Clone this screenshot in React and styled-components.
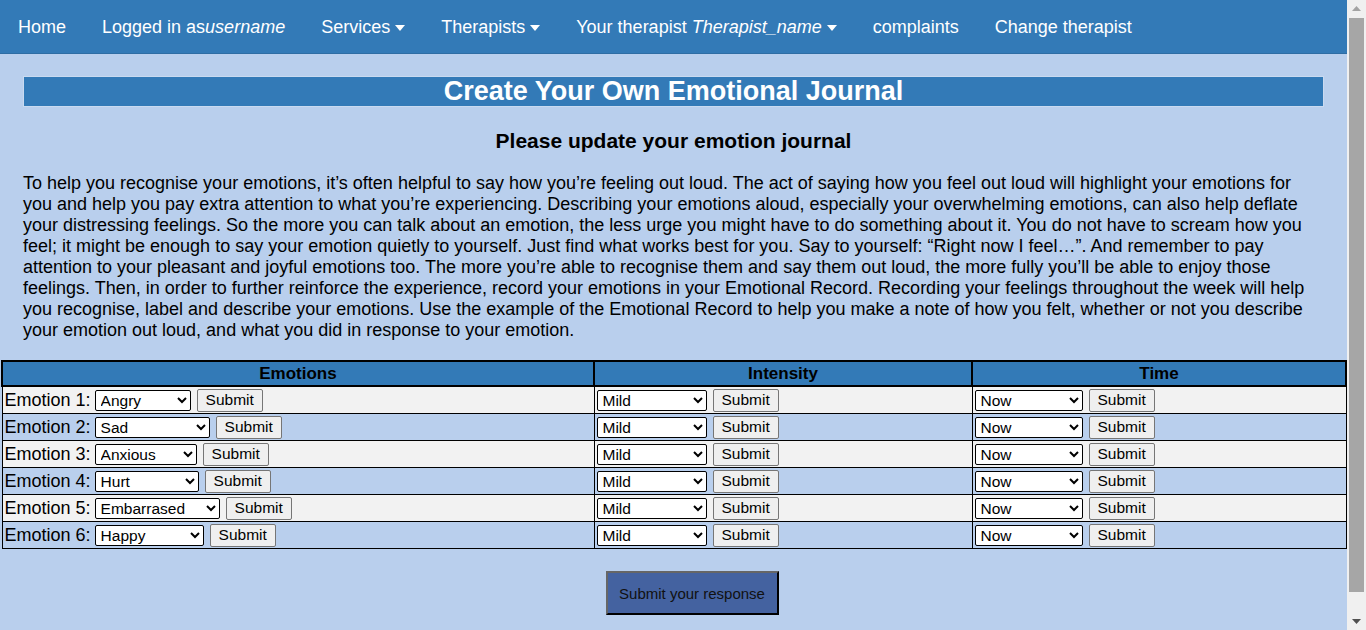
import React from "react";
import styled, { createGlobalStyle } from "styled-components";

const GlobalStyle = createGlobalStyle`
  html, body {
    margin: 0;
    padding: 0;
  }
  body {
    background: #b9cfed;
    font-family: "Liberation Sans", Arial, sans-serif;
    color: #000;
  }
`;

const Page = styled.div`
  width: calc(100% - 19px);
`;

/* window scrollbar, drawn since the capture hides the real one */
const ScrollBar = styled.div`
  position: fixed;
  top: 0;
  right: 0;
  width: 19px;
  height: 100vh;
  background: #f0f0f0;
  display: flex;
  flex-direction: column;
  align-items: center;
`;

const ScrollArrow = styled.div`
  height: 17px;
  display: flex;
  align-items: center;
  justify-content: center;
  svg {
    display: block;
  }
`;

const ScrollThumb = styled.div`
  width: 15px;
  margin-top: 1px;
  height: 574px;
  background: #a6a6a6;
`;

const ScrollSpacer = styled.div`
  flex: 1;
`;

const NavBar = styled.nav`
  display: flex;
  align-items: center;
  height: 53px;
  background: #337ab7;
  border-bottom: 1px solid #2e6da4;
`;

const NavItem = styled.a`
  display: flex;
  align-items: center;
  gap: 5px;
  padding: 1px 18px 0;
  color: #fff;
  font-size: 18px;
  text-decoration: none;
  white-space: nowrap;
  em {
    font-style: italic;
  }
`;

const Caret = styled.span`
  display: inline-block;
  width: 0;
  height: 0;
  border-left: 5px solid transparent;
  border-right: 5px solid transparent;
  border-top: 6px solid #fff;
  margin-top: 1px;
`;

const Main = styled.main`
  padding: 22px 23px 0;
`;

const TitleBar = styled.h1`
  margin: 0;
  height: 29px;
  line-height: 29px;
  background: #337ab7;
  border: 1px solid #c9daf0;
  color: #fff;
  text-align: center;
  font-size: 27px;
  font-weight: bold;
`;

const SubTitle = styled.h3`
  margin: 22px 0 0;
  text-align: center;
  font-size: 21px;
  line-height: 24px;
  font-weight: bold;
`;

const Intro = styled.p`
  margin: 20px 0 0;
  font-size: 18px;
  line-height: 21px;
`;

const Table = styled.table`
  margin: 19px 0 0 1px;
  width: calc(100% - 1px);
  border-collapse: collapse;
  table-layout: fixed;
  font-size: 18px;
`;

const HeadCell = styled.th`
  background: #337ab7;
  border: 2px solid #000;
  height: 23px;
  padding: 0;
  font-size: 17px;
  font-weight: bold;
  text-align: center;
  width: ${(p) => p.$w || "auto"};
`;

const Row = styled.tr`
  background: ${(p) => (p.$alt ? "#b9cfed" : "#f2f2f2")};
`;

const Cell = styled.td`
  border: 1px solid #000;
  height: 26px;
  padding: 0 2px;
  white-space: nowrap;
  overflow: hidden;
`;

const Label = styled.span`
  font-size: 18px;
  margin-right: 4px;
  vertical-align: middle;
`;

const Select = styled.select`
  width: ${(p) => p.$w}px;
  height: 21px;
  font-family: "Liberation Sans", Arial, sans-serif;
  font-size: 15.5px;
  border: 1px solid #000;
  border-radius: 2px;
  background: #fff;
  padding: 0 1px;
  vertical-align: middle;
  color: #000;
`;

const SmallButton = styled.button`
  height: 23px;
  margin-left: 6px;
  padding: 0 8px;
  font-family: "Liberation Sans", Arial, sans-serif;
  font-size: 15.5px;
  background: #efefef;
  border: 1px solid #767676;
  border-radius: 2px;
  vertical-align: middle;
  color: #000;
`;

const Footer = styled.div`
  display: flex;
  justify-content: center;
  padding: 22px 0 170px 37px;
`;

const SubmitAll = styled.button`
  width: 173px;
  height: 44px;
  background: #4462a0;
  color: #111;
  font-family: "Liberation Sans", Arial, sans-serif;
  font-size: 15px;
  border: 2px outset #666;
  border-right-color: #000;
  border-bottom-color: #000;
`;

const emotions = [
  { name: "Angry", w: 96 },
  { name: "Sad", w: 115 },
  { name: "Anxious", w: 102 },
  { name: "Hurt", w: 104 },
  { name: "Embarrased", w: 125 },
  { name: "Happy", w: 109 },
];

export default function App() {
  return (
    <>
      <GlobalStyle />
      <Page>
        <NavBar>
          <NavItem>Home</NavItem>
          <NavItem>
            <span>
              Logged in as<em>username</em>
            </span>
          </NavItem>
          <NavItem>
            Services <Caret />
          </NavItem>
          <NavItem>
            Therapists <Caret />
          </NavItem>
          <NavItem>
            <span>
              Your therapist <em>Therapist_name</em>
            </span>
            <Caret />
          </NavItem>
          <NavItem>complaints</NavItem>
          <NavItem>Change therapist</NavItem>
        </NavBar>
        <Main>
          <TitleBar>Create Your Own Emotional Journal</TitleBar>
          <SubTitle>Please update your emotion journal</SubTitle>
          <Intro>
            To help you recognise your emotions, it’s often helpful to say how you’re feeling out loud. The act of
            saying how you feel out loud will highlight your emotions for you and help you pay extra attention to
            what you’re experiencing. Describing your emotions aloud, especially your overwhelming emotions, can
            also help deflate your distressing feelings. So the more you can talk about an emotion, the less urge
            you might have to do something about it. You do not have to scream how you feel; it might be enough to
            say your emotion quietly to yourself. Just find what works best for you. Say to yourself: “Right now I
            feel…”. And remember to pay attention to your pleasant and joyful emotions too. The more you’re able to
            recognise them and say them out loud, the more fully you’ll be able to enjoy those feelings. Then, in
            order to further reinforce the experience, record your emotions in your Emotional Record. Recording
            your feelings throughout the week will help you recognise, label and describe your emotions. Use the
            example of the Emotional Record to help you make a note of how you felt, whether or not you describe
            your emotion out loud, and what you did in response to your emotion.
          </Intro>
        </Main>
        <Table>
          <thead>
            <tr>
              <HeadCell $w="590px">Emotions</HeadCell>
              <HeadCell $w="376px">Intensity</HeadCell>
              <HeadCell>Time</HeadCell>
            </tr>
          </thead>
          <tbody>
            {emotions.map((e, i) => (
              <Row key={e.name} $alt={i % 2 === 1}>
                <Cell>
                  <Label>Emotion {i + 1}:</Label>
                  <Select $w={e.w} defaultValue={e.name}>
                    <option>{e.name}</option>
                  </Select>
                  <SmallButton type="button">Submit</SmallButton>
                </Cell>
                <Cell>
                  <Select $w={110} defaultValue="Mild">
                    <option>Mild</option>
                    <option>Moderate</option>
                    <option>Strong</option>
                  </Select>
                  <SmallButton type="button">Submit</SmallButton>
                </Cell>
                <Cell>
                  <Select $w={108} defaultValue="Now">
                    <option>Now</option>
                    <option>Today</option>
                    <option>This week</option>
                  </Select>
                  <SmallButton type="button">Submit</SmallButton>
                </Cell>
              </Row>
            ))}
          </tbody>
        </Table>
        <Footer>
          <SubmitAll type="button">Submit your response</SubmitAll>
        </Footer>
      </Page>
      <ScrollBar>
        <ScrollArrow>
          <svg width="9" height="5" viewBox="0 0 9 5">
            <path d="M0 5 L4.5 0 L9 5 Z" fill="#a3a3a3" />
          </svg>
        </ScrollArrow>
        <ScrollThumb />
        <ScrollSpacer />
        <ScrollArrow>
          <svg width="9" height="5" viewBox="0 0 9 5">
            <path d="M0 0 L4.5 5 L9 0 Z" fill="#505050" />
          </svg>
        </ScrollArrow>
      </ScrollBar>
    </>
  );
}
